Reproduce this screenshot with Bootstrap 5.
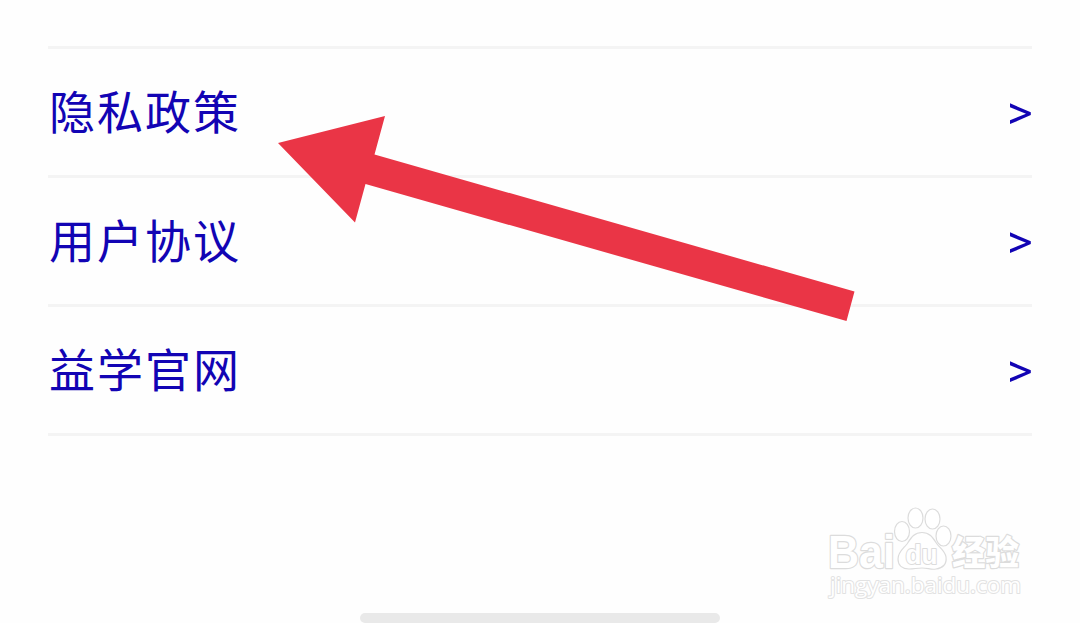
<!DOCTYPE html>
<html lang="zh-CN">
<head>
<meta charset="UTF-8">
<meta name="viewport" content="width=device-width, initial-scale=1.0">
<title>益学</title>
<link href="https://cdn.jsdelivr.net/npm/bootstrap@5.3.0/dist/css/bootstrap.min.css" rel="stylesheet">
<script src="https://cdn.jsdelivr.net/npm/bootstrap@5.3.0/dist/js/bootstrap.bundle.min.js"></script>
<style>
body {
    height: 623px;
    background: #fefefe;
    font-family: "Noto Sans CJK SC", sans-serif;
}
.menu {
    margin: 46px 48px 0;
    border-top: 3px solid #f4f4f4;
}
.menu-item {
    height: 129px;
    padding: 0 0 0 1px;
    border-bottom: 3px solid #f4f4f4;
    color: #1204b4;
    font-size: 46px;
    letter-spacing: 2px;
    line-height: 1;
}
.menu-item:hover {
    color: #1204b4;
}
.menu-item span {
    padding-bottom: 6px;
}
.arrow {
    width: 22px;
    height: 24px;
    margin-top: 1px;
}
.home-bar {
    width: 360px;
    height: 10px;
    background: #e9e9e9;
}
.overlay {
    pointer-events: none;
}
</style>
</head>
<body class="position-relative overflow-hidden d-flex flex-column">
<nav class="menu">
    <a href="#" class="menu-item d-flex align-items-center justify-content-between text-decoration-none">
        <span>隐私政策</span>
        <svg class="arrow" viewBox="0 0 22 24"><path d="M0 2.3L20.8 11.3V14.1L0 23.1V19.2L16 12.7L0 6.2Z" fill="currentColor"/></svg>
    </a>
    <a href="#" class="menu-item d-flex align-items-center justify-content-between text-decoration-none">
        <span>用户协议</span>
        <svg class="arrow" viewBox="0 0 22 24"><path d="M0 2.3L20.8 11.3V14.1L0 23.1V19.2L16 12.7L0 6.2Z" fill="currentColor"/></svg>
    </a>
    <a href="#" class="menu-item d-flex align-items-center justify-content-between text-decoration-none">
        <span>益学官网</span>
        <svg class="arrow" viewBox="0 0 22 24"><path d="M0 2.3L20.8 11.3V14.1L0 23.1V19.2L16 12.7L0 6.2Z" fill="currentColor"/></svg>
    </a>
</nav>
<div class="home-bar rounded-pill mt-auto mx-auto"></div>

<!-- 箭头和水印 -->
<svg class="overlay position-absolute top-0 start-0" width="1080" height="623" viewBox="0 0 1080 623">
    <path d="M278 143L385 116L374.5 154.5L854.5 291.5L846.5 321L365.5 184L355 222.5Z" fill="#ea3546"/>
    <g fill="#fff" stroke="#dcdcdc" stroke-width="1.2" stroke-linejoin="round">
        <g font-weight="bold" paint-order="stroke" stroke-width="2.4">
            <text x="828" y="567.5" font-family="Liberation Sans, sans-serif" font-size="46" textLength="67" lengthAdjust="spacingAndGlyphs">Bai</text>
            <text x="952" y="564.5" font-family="Noto Sans CJK SC, sans-serif" font-size="34" font-weight="900" textLength="67" lengthAdjust="spacingAndGlyphs">经验</text>
        </g>
        <ellipse cx="902" cy="531.5" rx="7.5" ry="10"/>
        <ellipse cx="915.5" cy="518" rx="7.5" ry="10"/>
        <ellipse cx="932.5" cy="519" rx="7.5" ry="10"/>
        <ellipse cx="943.5" cy="536" rx="7.5" ry="10"/>
        <path d="M922 532.5C914 532.5 911 538 907 544C903 549 898 552 898 559C898 566 903 569 909 569C914 569 917 568 922 568C928 568 931 570 936 569C943 568 947 564 946 557C945 551 940 548 937 544C933 538 930 532.5 922 532.5Z"/>
        <text x="905.5" y="563.5" font-family="Liberation Sans, sans-serif" font-size="27" font-weight="bold" textLength="32" lengthAdjust="spacingAndGlyphs" paint-order="stroke" stroke-width="2">du</text>
        <text x="830" y="593" font-family="Open Sans, sans-serif" font-size="22" font-weight="500" textLength="191" lengthAdjust="spacingAndGlyphs" paint-order="stroke" stroke="#e2e2e2" stroke-width="2">jingyan.baidu.com</text>
    </g>
</svg>
</body>
</html>
